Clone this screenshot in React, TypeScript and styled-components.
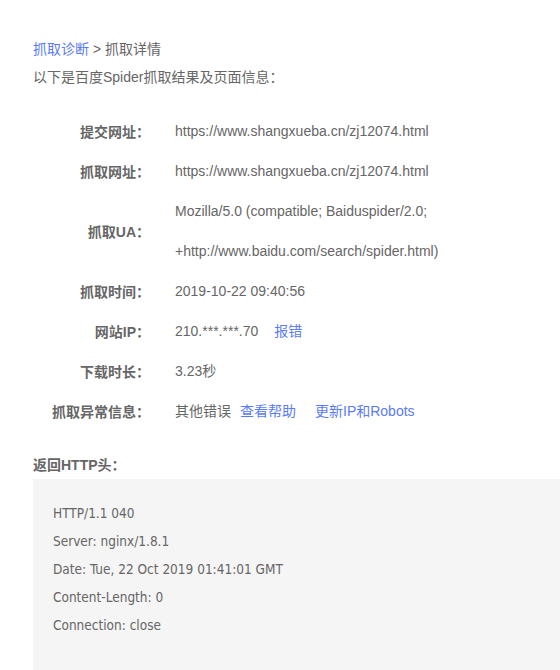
import styled, { createGlobalStyle } from "styled-components";

const GlobalStyle = createGlobalStyle`
  body {
    margin: 0;
    background: #fff;
    font-family: "Liberation Sans", Arial, "Noto Sans CJK SC", sans-serif;
    color: #666;
  }
`;

const Page = styled.div`
  padding: 35px 0 0 33px;
  font-size: 14px;
`;

const Crumbs = styled.div`
  line-height: 28px;
  color: #666;
`;

const Link = styled.a<{ gap?: number }>`
  color: #5a7bf7;
  text-decoration: none;
  margin-left: ${(p) => p.gap ?? 0}px;
`;

const Intro = styled.p`
  margin: 0;
  line-height: 28px;
`;

const InfoTable = styled.div`
  margin-top: 20px;
  display: grid;
  grid-template-columns: 117px 1fr;
  column-gap: 25px;
`;

const Label = styled.div`
  display: flex;
  align-items: center;
  justify-content: flex-end;
  font-weight: bold;
  color: #666;
  white-space: nowrap;
  min-height: 40px;
`;

const Value = styled.div`
  line-height: 40px;
  color: #666;
`;

const SectionTitle = styled.div`
  margin-top: 21px;
  line-height: 27px;
  font-weight: bold;
  color: #666;
`;

const HeaderBox = styled.div`
  background: #f5f5f5;
  padding: 20px 20px 40px;
  font-family: "DejaVu Sans Condensed", "Liberation Sans", sans-serif;
  font-size: 13.5px;
  color: #666;
`;

const HeaderLine = styled.div`
  line-height: 28px;
`;

const rows: { label: string; value: React.ReactNode }[] = [
  { label: "提交网址：", value: "https://www.shangxueba.cn/zj12074.html" },
  { label: "抓取网址：", value: "https://www.shangxueba.cn/zj12074.html" },
  {
    label: "抓取UA：",
    value: (
      <>
        Mozilla/5.0 (compatible; Baiduspider/2.0;
        <br />
        +http://www.baidu.com/search/spider.html)
      </>
    ),
  },
  { label: "抓取时间：", value: "2019-10-22 09:40:56" },
  {
    label: "网站IP：",
    value: (
      <>
        210.***.***.70<Link gap={16}>报错</Link>
      </>
    ),
  },
  { label: "下载时长：", value: "3.23秒" },
  {
    label: "抓取异常信息：",
    value: (
      <>
        其他错误<Link gap={9}>查看帮助</Link>
        <Link gap={19}>更新IP和Robots</Link>
      </>
    ),
  },
];

const headers = [
  "HTTP/1.1 040",
  "Server: nginx/1.8.1",
  "Date: Tue, 22 Oct 2019 01:41:01 GMT",
  "Content-Length: 0",
  "Connection: close",
];

export default function App() {
  return (
    <>
      <GlobalStyle />
      <Page>
        <Crumbs>
          <Link>抓取诊断</Link> &gt; 抓取详情
        </Crumbs>
        <Intro>以下是百度Spider抓取结果及页面信息：</Intro>
        <InfoTable>
          {rows.map((r) => [
            <Label key={r.label + "l"}>{r.label}</Label>,
            <Value key={r.label + "v"}>{r.value}</Value>,
          ])}
        </InfoTable>
        <SectionTitle>返回HTTP头：</SectionTitle>
        <HeaderBox>
          {headers.map((h) => (
            <HeaderLine key={h}>{h}</HeaderLine>
          ))}
        </HeaderBox>
      </Page>
    </>
  );
}
